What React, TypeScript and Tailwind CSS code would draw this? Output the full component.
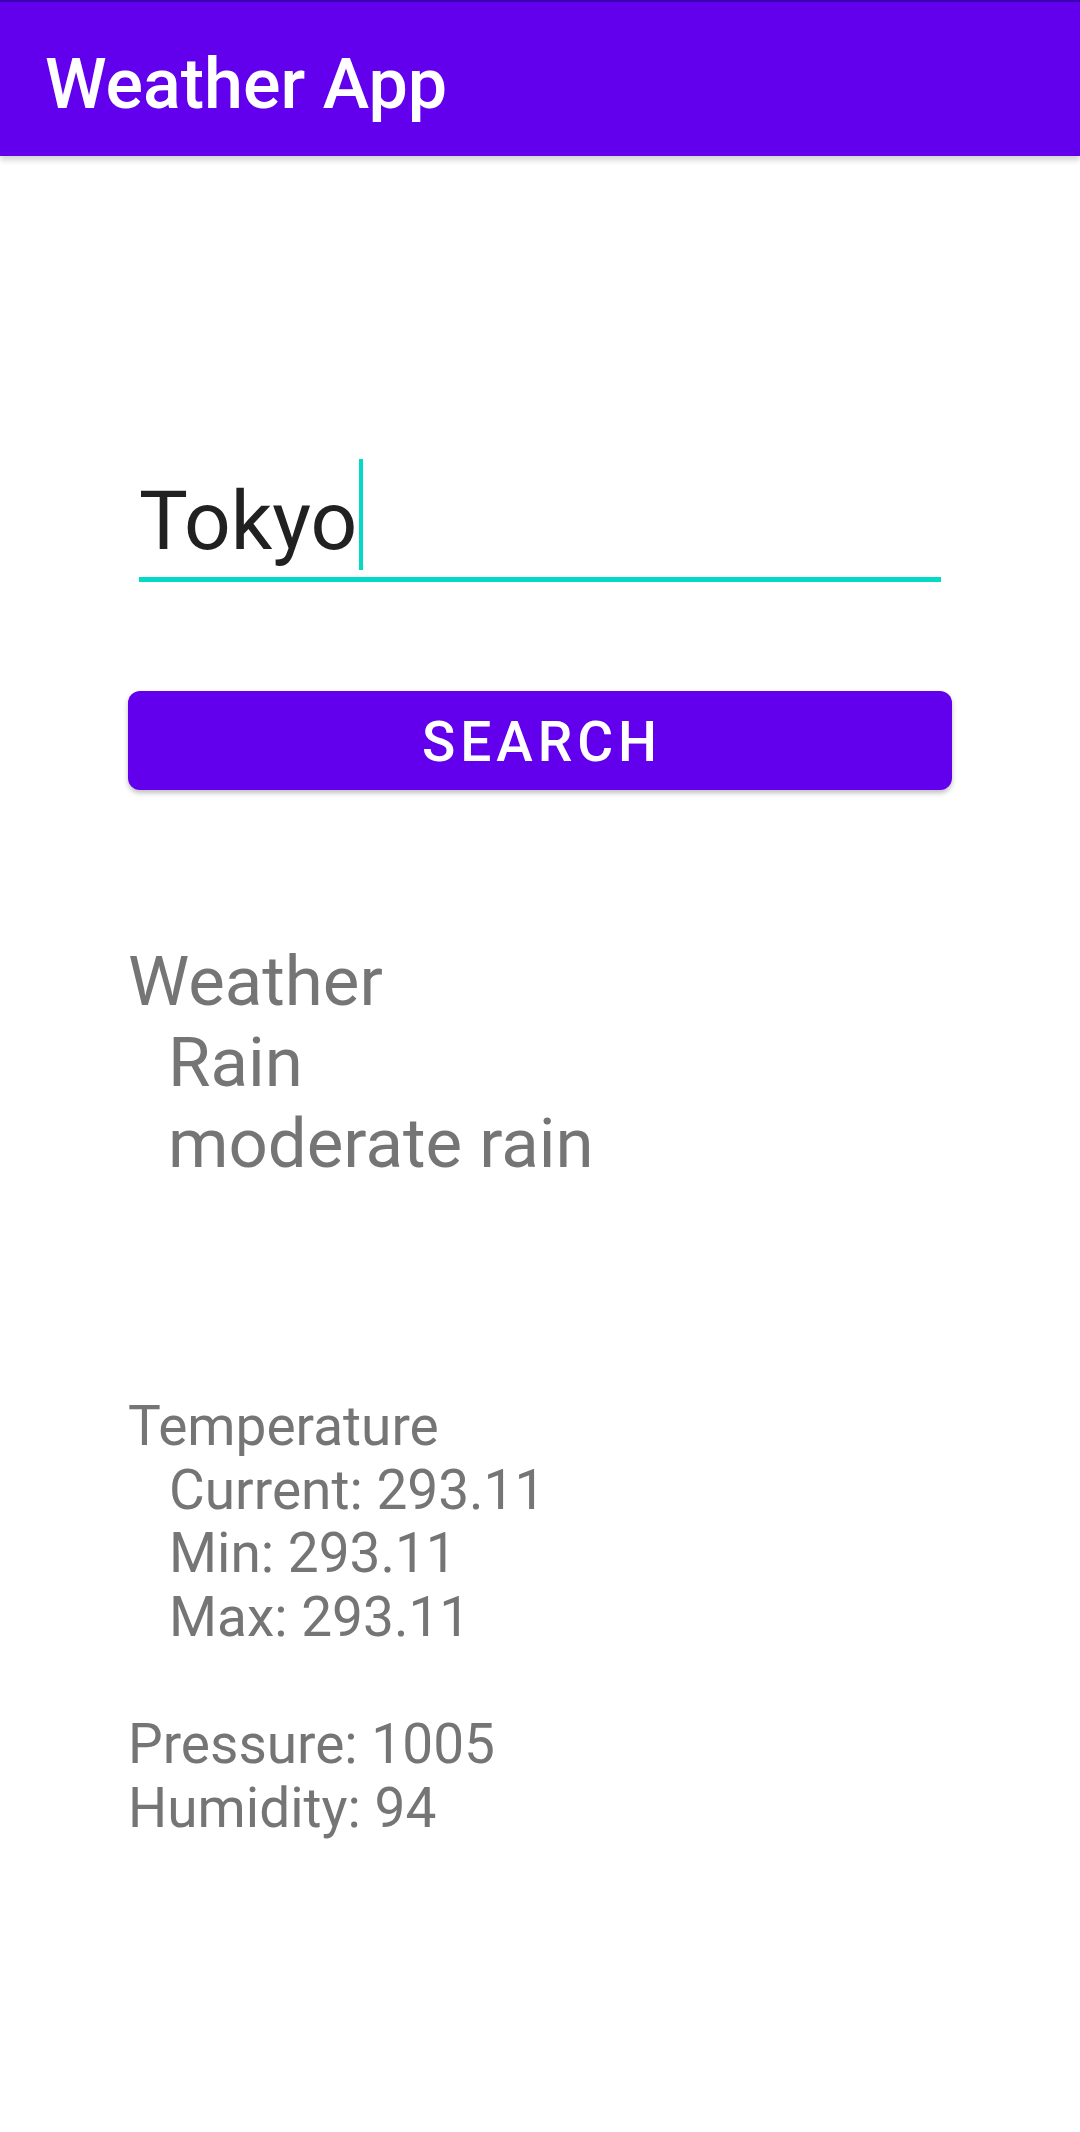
import React from "react";

const weatherLines = [
  { text: "Weather", indent: false },
  { text: "Rain", indent: true },
  { text: "moderate rain", indent: true },
];

const details = [
  { text: "Temperature", indent: false },
  { text: "Current: 293.11", indent: true },
  { text: "Min: 293.11", indent: true },
  { text: "Max: 293.11", indent: true },
  { text: "", indent: false },
  { text: "Pressure: 1005", indent: false },
  { text: "Humidity: 94", indent: false },
];

export default function App() {
  return (
    <div className="min-h-screen bg-white font-[Roboto,sans-serif]">
      {/* toolbar */}
      <header className="h-[156px] bg-[#6200EE] border-t-2 border-[#3700B3] shadow-[0_4px_6px_rgba(0,0,0,0.18)] flex items-center pl-[45px] pt-[10px]">
        <h1 className="text-[70px] leading-[80px] font-medium text-white">Weather App</h1>
      </header>

      <main className="px-[128px] flex flex-col">
        {/* city input */}
        <div className="mx-[11px] mt-[317px] pb-[8px] border-b-[5px] border-[#03DAC5]">
          <div className="text-[82px] leading-[96px] text-[#212121]">
            <span className="relative">
              Tokyo
              <span className="absolute -right-[6px] -top-[14px] h-[111px] w-[4px] bg-[#03DAC5]" />
            </span>
          </div>
        </div>

        <button
          type="button"
          className="mt-[109px] h-[99px] w-full rounded-[12px] bg-[#6200EE] pt-[4px] pl-[4px] text-white text-[55px] font-medium tracking-[0.09em] shadow-[0_3px_5px_rgba(0,0,0,0.25)]"
        >
          SEARCH
        </button>

        {/* weather description */}
        <div className="mt-[151px] text-[69px] leading-[81px] text-[#757575]">
          {weatherLines.map((line, i) => (
            <div key={i} className={line.indent ? "pl-[40px]" : ""}>
              {line.text}
            </div>
          ))}
        </div>

        {/* temperature etc */}
        <div className="mt-[211px] text-[55px] leading-[63.6px] text-[#757575]">
          {details.map((line, i) => (
            <div key={i} className={line.indent ? "h-[63.6px] pl-[41px]" : "h-[63.6px]"}>
              {line.text}
            </div>
          ))}
        </div>
      </main>
    </div>
  );
}
